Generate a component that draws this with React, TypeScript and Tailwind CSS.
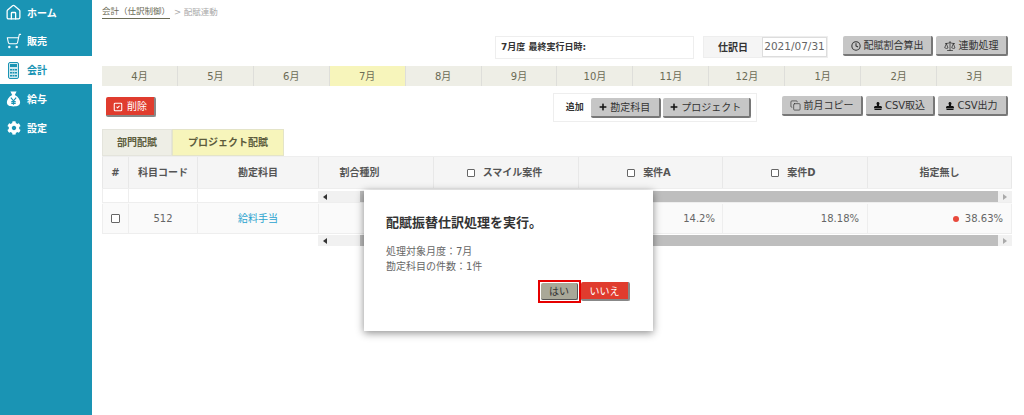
import { Clock, Copy, House, Scale, ShoppingCart, SquareCheck } from "lucide-react";
import { FaCog, FaPlus, FaStamp } from "react-icons/fa";

const months = ["4月", "5月", "6月", "7月", "8月", "9月", "10月", "11月", "12月", "1月", "2月", "3月"];

function MoneyBag() {
  return (
    <svg width="15" height="18" viewBox="0 0 17 19">
      <path d="M5 1h7l-2 4c4 2 6 6 6 8 0 4-3 5-7.500 5S1 17 1 13c0-2 2-6 6-8z" fill="#fff" />
      <path d="M5.500 8l3 3.500 3-3.500M8.500 11.500V16M6 12.500h5M6 14.500h5" stroke="#1a94b4" strokeWidth="1.300" fill="none" />
    </svg>
  );
}

function CalcIcon() {
  return (
    <svg width="11" height="17" viewBox="0 0 11 17">
      <rect x="0.500" y="0.500" width="10" height="16" rx="1.500" fill="#cfe9f0" stroke="#1a94b4" />
      <rect x="2" y="2" width="7" height="3" fill="#1a94b4" />
      <path d="M2 7h2v1.500H2zM4.500 7h2v1.500h-2zM7 7h2v1.500H7zM2 10h2v1.500H2zM4.500 10h2v1.500h-2zM7 10h2v1.500H7zM2 13h2v1.500H2zM4.500 13h2v1.500h-2zM7 13h2v1.500H7z" fill="#1a94b4" />
    </svg>
  );
}

function NavItem({ icon, label, active, h }: { icon: React.ReactNode; label: string; active?: boolean; h: string }) {
  return (
    <div className={`flex items-center ${h} ${active ? "bg-white text-[#1a94b4]" : "text-white"}`}>
      <div className="flex w-[27px] justify-center">{icon}</div>
      <span className="pt-[1px] text-[10px] font-bold">{label}</span>
    </div>
  );
}

function GrayBtn({ children, w }: { children: React.ReactNode; w: string }) {
  return (
    <button className={`flex h-[20px] items-center justify-center gap-[3px] rounded-[2px] border-r-2 border-b-2 border-[#777] bg-[#c6c6c6] pt-[1px] text-[10px] font-normal text-[#333] ${w}`}>
      {children}
    </button>
  );
}

function ScrollBar() {
  return (
    <div className="flex h-[11px] flex-1 items-center bg-[#f1f1f1]">
      <div className="flex w-[14px] justify-center">
        <div className="h-0 w-0 border-y-[3px] border-r-[4px] border-y-transparent border-r-[#333]" />
      </div>
      <div className="ml-[28px] h-[11px] flex-1 bg-[#bebebe]" />
      <div className="flex w-[14px] justify-center">
        <div className="h-0 w-0 border-y-[3px] border-l-[4px] border-y-transparent border-l-[#aaa]" />
      </div>
    </div>
  );
}

function HeadCheck({ label }: { label: string }) {
  return (
    <div className="flex items-center justify-center gap-[8px] pr-[3px]">
      <span className="h-[8px] w-[8px] rounded-[1px] border border-[#666] bg-white" />
      <span>{label}</span>
    </div>
  );
}

const cols = "grid grid-cols-[26px_69px_121px_115px_145px_144px_145px_145px]";

export default function App() {
  return (
    <div
      className="relative flex h-[415px] w-[1024px] overflow-hidden bg-white text-[#555]"
      style={{ fontFamily: '"DejaVu Sans", "Noto Sans CJK JP", sans-serif' }}
    >
      <aside className="flex h-full w-[92px] shrink-0 flex-col bg-[#1a94b4]">
        <NavItem h="h-[25px]" label="ホーム" icon={<House size={17} strokeWidth={1.8} />} />
        <NavItem h="h-[31px]" label="販売" icon={<ShoppingCart className="-scale-x-100" size={16} strokeWidth={1.6} />} />
        <NavItem h="h-[28px]" active label="会計" icon={<CalcIcon />} />
        <NavItem h="h-[29px]" label="給与" icon={<MoneyBag />} />
        <NavItem h="h-[29px]" label="設定" icon={<FaCog size={14} />} />
      </aside>

      <main className="w-[932px] pl-[10px] pr-[12px]">
        <div className="flex h-[24px] items-center text-[8.500px] text-[#aaa]">
          <span className="border-b border-[#6b6b55] text-[#6b6b55]">会計（仕訳制御）</span>
          <span className="ml-[4px]">&gt; 配賦連動</span>
        </div>

        <div className="mt-[12px] flex h-[23px] pr-[4px]">
          <div className="ml-[393px] flex h-[23px] w-[199px] items-center border border-[#eee] pl-[5px] pt-[1px] text-[9px] font-bold text-[#333]">
            7月度 最終実行日時:
          </div>
          <div className="ml-[9px] flex h-[22px] w-[125px] border border-[#eee] bg-[#f5f5f5]">
            <div className="flex w-[58px] items-center justify-center pt-[1px] text-[10px] font-bold text-[#333]">仕訳日</div>
            <div className="flex flex-1 items-center justify-center border border-[#ddd] bg-white text-[10.500px] text-[#666]">
              2021/07/31
            </div>
          </div>
          <div className="ml-[15px]">
            <GrayBtn w="w-[90px]"><Clock size={10} strokeWidth={2.5} /> 配賦割合算出</GrayBtn>
          </div>
          <div className="ml-[3px]">
            <GrayBtn w="w-[72px]"><Scale size={12} strokeWidth={1.5} /> 連動処理</GrayBtn>
          </div>
        </div>

        <div className="mt-[7px] grid h-[20px] grid-cols-12 gap-x-px bg-[#dededa]">
          {months.map((m) => (
            <div
              key={m}
              className={`flex items-center justify-center text-[10px] text-[#6b6b55] ${m === "7月" ? "bg-[#f7f5bb]" : "bg-[#eeeee6]"}`}
            >
              {m}
            </div>
          ))}
        </div>

        <div className="mt-[7px] flex h-[29px] items-start pr-[4px]">
          <button className="ml-[4px] mt-[4px] flex h-[20px] w-[50px] items-center justify-center gap-[4px] rounded-[2px] border-r-2 border-b-2 border-[#888] bg-[#e03c2e] pt-[1px] text-[10px] text-white">
            <SquareCheck size={10} strokeWidth={2.5} /> 削除
          </button>
          <div className="ml-[397px] flex h-[29px] w-[205px] items-center border border-[#eee] pl-[12px] text-[9px] font-bold text-[#333]">
            <span className="mr-[7px]">追加</span>
            <GrayBtn w="w-[70px]"><FaPlus size={8} color="#111" /> 勘定科目</GrayBtn>
            <div className="ml-[2px]">
              <GrayBtn w="w-[88px]"><FaPlus size={8} color="#111" /> プロジェクト</GrayBtn>
            </div>
          </div>
          <div className="ml-[25px] mt-[3px]">
            <GrayBtn w="w-[81px]"><Copy size={11} strokeWidth={1.5} /> 前月コピー</GrayBtn>
          </div>
          <div className="ml-[3px] mt-[3px]">
            <GrayBtn w="w-[69px]"><FaStamp size={8} color="#111" /> CSV取込</GrayBtn>
          </div>
          <div className="ml-[3px] mt-[3px]">
            <GrayBtn w="w-[70px]"><FaStamp size={8} color="#111" /> CSV出力</GrayBtn>
          </div>
        </div>

        <div className="mt-[6px] flex h-[28px] pt-[1px] text-[10px] font-bold text-[#5c5c3c]">
          <div className="flex w-[70px] items-center justify-center border border-[#e4e4dc] bg-[#eeeee6]">部門配賦</div>
          <div className="flex w-[112px] items-center justify-center border border-[#e4e4c8] bg-[#f7f5bb]">プロジェクト配賦</div>
        </div>

        <div className={`${cols} h-[33px] border-y border-[#eee] bg-[#f5f5f5] text-center text-[10px] font-bold text-[#555]`}>
          {["#", "科目コード", "勘定科目"].map((h) => (
            <div key={h} className="flex items-center justify-center border-l border-[#e8e8e8]">{h}</div>
          ))}
          <div className="flex items-center justify-center border-l border-[#e8e8e8] pr-[33px]">割合種別</div>
          <div className="flex items-center justify-center border-l border-[#e8e8e8]"><HeadCheck label="スマイル案件" /></div>
          <div className="flex items-center justify-center border-l border-[#e8e8e8]"><HeadCheck label="案件A" /></div>
          <div className="flex items-center justify-center border-l border-[#e8e8e8]"><HeadCheck label="案件D" /></div>
          <div className="flex items-center justify-center border-x border-[#e8e8e8]">指定無し</div>
        </div>

        <div className="flex h-[13px]">
          <div className="w-[26px] border-l border-[#eee]" />
          <div className="w-[69px] border-l border-[#eee]" />
          <div className="w-[121px] border-l border-[#eee]" />
          <div className="flex flex-1 pt-[2px]">
            <ScrollBar />
          </div>
        </div>

        <div className={`${cols} h-[32px] border-y border-[#eee] bg-[#fafafa] pt-[1px] text-[10px] text-[#666]`}>
          <div className="flex items-center justify-center border-l border-[#eee]">
            <span className="h-[9px] w-[9px] rounded-[1px] border border-[#666] bg-white" />
          </div>
          <div className="flex items-center justify-center border-l border-[#eee]">512</div>
          <div className="flex items-center justify-center border-l border-[#eee] text-[#2ba3cf]">給料手当</div>
          <div className="border-l border-[#eee]" />
          <div className="border-l border-[#eee]" />
          <div className="flex items-center justify-end border-l border-[#eee] pr-[7px]">14.2%</div>
          <div className="flex items-center justify-end border-l border-[#eee] pr-[8px]">18.18%</div>
          <div className="flex items-center justify-end gap-[6px] border-x border-[#eee] pr-[8px]">
            <span className="h-[6px] w-[6px] rounded-full bg-[#e8493c]" />
            38.63%
          </div>
        </div>

        <div className="flex h-[13px] pl-[216px] pt-[1px]">
          <ScrollBar />
        </div>
      </main>

      <div className="absolute left-[364px] top-[190px] h-[141px] w-[289px] bg-white pl-[22px] pt-[23px] shadow-[0_2px_8px_rgba(0,0,0,0.45)]">
        <div className="text-[13px] font-bold leading-[20px] text-[#333]">配賦振替仕訳処理を実行。</div>
        <div className="mt-[11px] text-[10px] leading-[15px] text-[#666]">
          <div>処理対象月度：7月</div>
          <div>勘定科目の件数：1件</div>
        </div>
        <div className="absolute left-[174px] top-[90px] flex items-center">
          <div className="border-2 border-[#e60000] p-[1px]">
            <button className="flex h-[17px] w-[37px] items-center justify-center rounded-[2px] border-r border-b border-[#555] bg-[#a9a898] pt-[1px] text-[10px] text-[#333]">
              はい
            </button>
          </div>
          <button className="flex h-[19px] w-[49px] items-center justify-center rounded-[2px] border-r-2 border-b-2 border-[#888] bg-[#e03c2e] pt-[1px] text-[10px] text-white">
            いいえ
          </button>
        </div>
      </div>
    </div>
  );
}
